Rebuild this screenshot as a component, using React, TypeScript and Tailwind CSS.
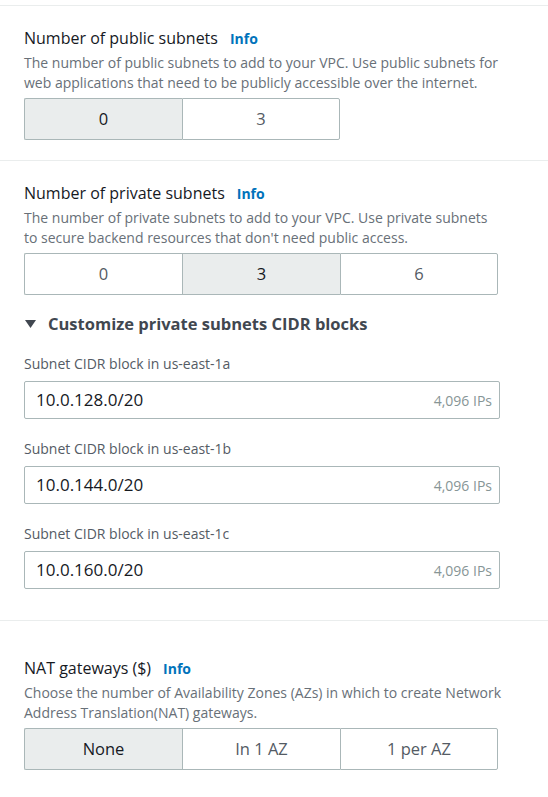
import React from "react";

const font = { fontFamily: '"Open Sans", "Noto Sans", sans-serif' };

function Title({ text }: { text: string }) {
  return (
    <div className="flex items-baseline gap-[12px]">
      <span className="text-[16px] leading-[24px] text-[#16191f]">{text}</span>
      <span className="text-[14px] font-bold text-[#0073bb]">Info</span>
    </div>
  );
}

function Desc({ children }: { children: React.ReactNode }) {
  return <p className="mt-[3px] text-[14px] leading-[20px] text-[#687078]">{children}</p>;
}

function Segments({ options, selected }: { options: string[]; selected: number }) {
  return (
    <div className="mt-[5px] flex">
      {options.map((opt, i) => (
        <div
          key={opt}
          className={
            "flex h-[42px] w-[158px] items-center justify-center border-y border-l border-[#aab7b8] text-[16.5px] " +
            (i === 0 ? "rounded-l-[2px] " : "") +
            (i === options.length - 1 ? "rounded-r-[2px] border-r " : "") +
            (i === selected ? "bg-[#eaeded] text-[#16191f]" : "bg-white text-[#545b64]")
          }
        >
          {opt}
        </div>
      ))}
    </div>
  );
}

function CidrInput({ az, value, first }: { az: string; value: string; first?: boolean }) {
  return (
    <div className={first ? "mt-[18px]" : "mt-[20px]"}>
      <div className="text-[14px] leading-[20px] text-[#545b64]">Subnet CIDR block in {az}</div>
      <div className="mt-[7px] flex h-[38px] w-[476px] items-center justify-between rounded-[2px] border border-[#aab7b8] pl-[11px] pr-[7px]">
        <span className="text-[17px] text-[#16191f]">{value}</span>
        <span className="text-[14px] text-[#879596]">4,096 IPs</span>
      </div>
    </div>
  );
}

export default function App() {
  return (
    <div className="h-[797px] w-[548px] overflow-hidden bg-white" style={font}>
      <div className="mt-[5px] border-t border-[#eaeded] px-[24px] pb-[20px] pt-[20px]">
        <Title text="Number of public subnets" />
        <Desc>
          The number of public subnets to add to your VPC. Use public subnets for
          <br />
          web applications that need to be publicly accessible over the internet.
        </Desc>
        <Segments options={["0", "3"]} selected={0} />
      </div>

      <div className="border-t border-[#eaeded] px-[24px] pb-[31px] pt-[20px]">
        <Title text="Number of private subnets" />
        <Desc>
          The number of private subnets to add to your VPC. Use private subnets
          <br />
          to secure backend resources that don't need public access.
        </Desc>
        <Segments options={["0", "3", "6"]} selected={1} />

        <div className="mt-[17px] flex h-[24px] items-center gap-[12px]">
          <svg width="11" height="8" viewBox="0 0 11 8" className="ml-[1px]">
            <path d="M0 0h11L5.5 8z" fill="#414750" />
          </svg>
          <span className="text-[16.5px] font-bold text-[#414750]">Customize private subnets CIDR blocks</span>
        </div>

        <CidrInput az="us-east-1a" value="10.0.128.0/20" first />
        <CidrInput az="us-east-1b" value="10.0.144.0/20" />
        <CidrInput az="us-east-1c" value="10.0.160.0/20" />
      </div>

      <div className="border-t border-[#eaeded] px-[24px] pt-[35px]">
        <Title text="NAT gateways ($)" />
        <Desc>
          Choose the number of Availability Zones (AZs) in which to create Network
          <br />
          Address Translation(NAT) gateways.
        </Desc>
        <Segments options={["None", "In 1 AZ", "1 per AZ"]} selected={0} />
      </div>
    </div>
  );
}
